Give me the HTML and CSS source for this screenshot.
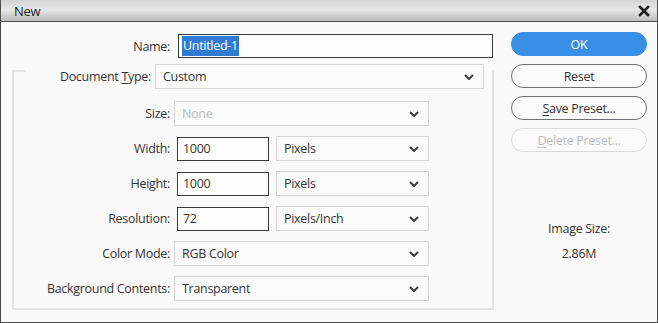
FILE: index.html
```html
<!DOCTYPE html>
<html lang="en">
<head>
    <meta charset="UTF-8">
    <title>New</title>
    <link rel="stylesheet" href="styles.css">
</head>
<body>
    <div class="window">
        <div class="titlebar">
            <span class="title">New</span>
            <svg class="close" width="12" height="12" viewBox="0 0 12 12">
                <path d="M2 2 L10 10 M10 2 L2 10" stroke="#1e1e1e" stroke-width="2.6" stroke-linecap="square"/>
            </svg>
        </div>

        <div class="main">
            <div class="form">
                <div class="name-row">
                    <label class="label">Name:</label>
                    <div class="field name-field"><span class="selected">Untitled-1</span></div>
                </div>

                <div class="group">
                    <div class="group-head">
                        <label class="label head-label">Document <u>T</u>ype:</label>
                        <div class="dropdown head-dropdown">
                            <span>Custom</span>
                            <svg class="chev" width="10" height="6" viewBox="0 0 10 6"><path d="M1 1 L5 5 L9 1" fill="none" stroke="#3c3c3c" stroke-width="2"/></svg>
                        </div>
                    </div>

                    <div class="rows">
                        <label class="label">Size:</label>
                        <div class="dropdown wide disabled">
                            <span>None</span>
                            <svg class="chev" width="10" height="6" viewBox="0 0 10 6"><path d="M1 1 L5 5 L9 1" fill="none" stroke="#3c3c3c" stroke-width="2"/></svg>
                        </div>

                        <label class="label">Width:</label>
                        <div class="pair">
                            <div class="field num">1000</div>
                            <div class="dropdown unit">
                                <span>Pixels</span>
                                <svg class="chev" width="10" height="6" viewBox="0 0 10 6"><path d="M1 1 L5 5 L9 1" fill="none" stroke="#3c3c3c" stroke-width="2"/></svg>
                            </div>
                        </div>

                        <label class="label">Height:</label>
                        <div class="pair">
                            <div class="field num">1000</div>
                            <div class="dropdown unit">
                                <span>Pixels</span>
                                <svg class="chev" width="10" height="6" viewBox="0 0 10 6"><path d="M1 1 L5 5 L9 1" fill="none" stroke="#3c3c3c" stroke-width="2"/></svg>
                            </div>
                        </div>

                        <label class="label">Resolution:</label>
                        <div class="pair">
                            <div class="field num">72</div>
                            <div class="dropdown unit">
                                <span>Pixels/Inch</span>
                                <svg class="chev" width="10" height="6" viewBox="0 0 10 6"><path d="M1 1 L5 5 L9 1" fill="none" stroke="#3c3c3c" stroke-width="2"/></svg>
                            </div>
                        </div>

                        <label class="label">Color Mode:</label>
                        <div class="dropdown wide">
                            <span>RGB Color</span>
                            <svg class="chev" width="10" height="6" viewBox="0 0 10 6"><path d="M1 1 L5 5 L9 1" fill="none" stroke="#3c3c3c" stroke-width="2"/></svg>
                        </div>

                        <label class="label">Background Contents:</label>
                        <div class="dropdown wide">
                            <span>Transparent</span>
                            <svg class="chev" width="10" height="6" viewBox="0 0 10 6"><path d="M1 1 L5 5 L9 1" fill="none" stroke="#3c3c3c" stroke-width="2"/></svg>
                        </div>
                    </div>
                </div>
            </div>

            <div class="side">
                <button class="btn primary">OK</button>
                <button class="btn">Reset</button>
                <button class="btn"><u>S</u>ave Preset...</button>
                <button class="btn disabled"><u>D</u>elete Preset...</button>

                <div class="image-size">
                    <div>Image Size:</div>
                    <div>2.86M</div>
                </div>
            </div>
        </div>
    </div>
</body>
</html>
```

FILE: styles.css
```css
body {
    margin: 0;
    font-family: "Open Sans", "Noto Sans", sans-serif;
    font-size: 12.5px;
    letter-spacing: -0.3px;
    color: #353535;
    background: #f9f9f9;
}

.window {
    width: 656px;
    height: 322px;
    border: 1px solid #4d4d4d;
    border-top: none;
    background: #f9f9f9;
}

.titlebar {
    height: 21px;
    display: flex;
    align-items: center;
    justify-content: space-between;
    padding: 0 7px 0 13px;
    background: linear-gradient(#d4d4d4, #e6e6e6 45%, #bdbdbd);
    border-bottom: 1px solid #4d4d4d;
}

.title {
    font-size: 13px;
    color: #1f1f1f;
}

.main {
    display: flex;
    padding: 10px 0 0 11px;
}

.form {
    width: 482px;
}

.label {
    text-align: right;
    white-space: nowrap;
}

u {
    text-decoration-thickness: 1px;
    text-underline-offset: 2px;
}

.name-row {
    display: flex;
    align-items: center;
    margin-top: 2px;
}

.name-row .label {
    width: 158px;
    margin-right: 8px;
}

.field {
    box-sizing: border-box;
    height: 24px;
    border: 1px solid #3a3a3a;
    background: #fdfdfd;
    display: flex;
    align-items: center;
    padding-left: 3px;
}

.name-field {
    width: 315px;
}

.selected {
    background: #2f7ad3;
    color: #fff;
    padding: 1px 1px 2px;
}

.group {
    margin-top: 12px;
    border: 2px solid #e3e3e3;
    padding-bottom: 7px;
}

.group-head {
    display: flex;
    align-items: center;
    margin: -8px 0 0 12px;
    padding-right: 8px;
    background: #f9f9f9;
}

.head-label {
    width: 125px;
    margin-right: 4px;
}

.head-dropdown {
    flex: 1;
}

.dropdown {
    box-sizing: border-box;
    height: 25px;
    border: 1px solid #d6d6d6;
    background: #fbfbfb;
    display: flex;
    align-items: center;
    justify-content: space-between;
    padding: 0 9px 0 7px;
}

.dropdown.disabled span {
    color: #b9b9b9;
}

.rows {
    display: grid;
    grid-template-columns: 156px 255px;
    column-gap: 4px;
    row-gap: 10px;
    align-items: center;
    margin-top: 12px;
}

.pair {
    display: flex;
    align-items: center;
}

.num {
    width: 92px;
    margin-left: 3px;
    padding-left: 5px;
}

.unit {
    width: 153px;
    margin-left: 7px;
}

.side {
    width: 136px;
    margin-left: 17px;
    display: flex;
    flex-direction: column;
    gap: 8px;
}

.btn {
    box-sizing: border-box;
    height: 24px;
    border: 1px solid #707070;
    border-radius: 12px;
    background: #fbfbfb;
    font-family: inherit;
    font-size: 12.5px;
    letter-spacing: -0.3px;
    color: #353535;
    padding: 0;
}

.btn.primary {
    background: #398ee6;
    border-color: #398ee6;
    color: #fff;
}

.btn.disabled {
    border-color: #d9d9d9;
    color: #bdbdbd;
}

.image-size {
    margin-top: 56px;
    text-align: center;
    line-height: 25px;
}
```
